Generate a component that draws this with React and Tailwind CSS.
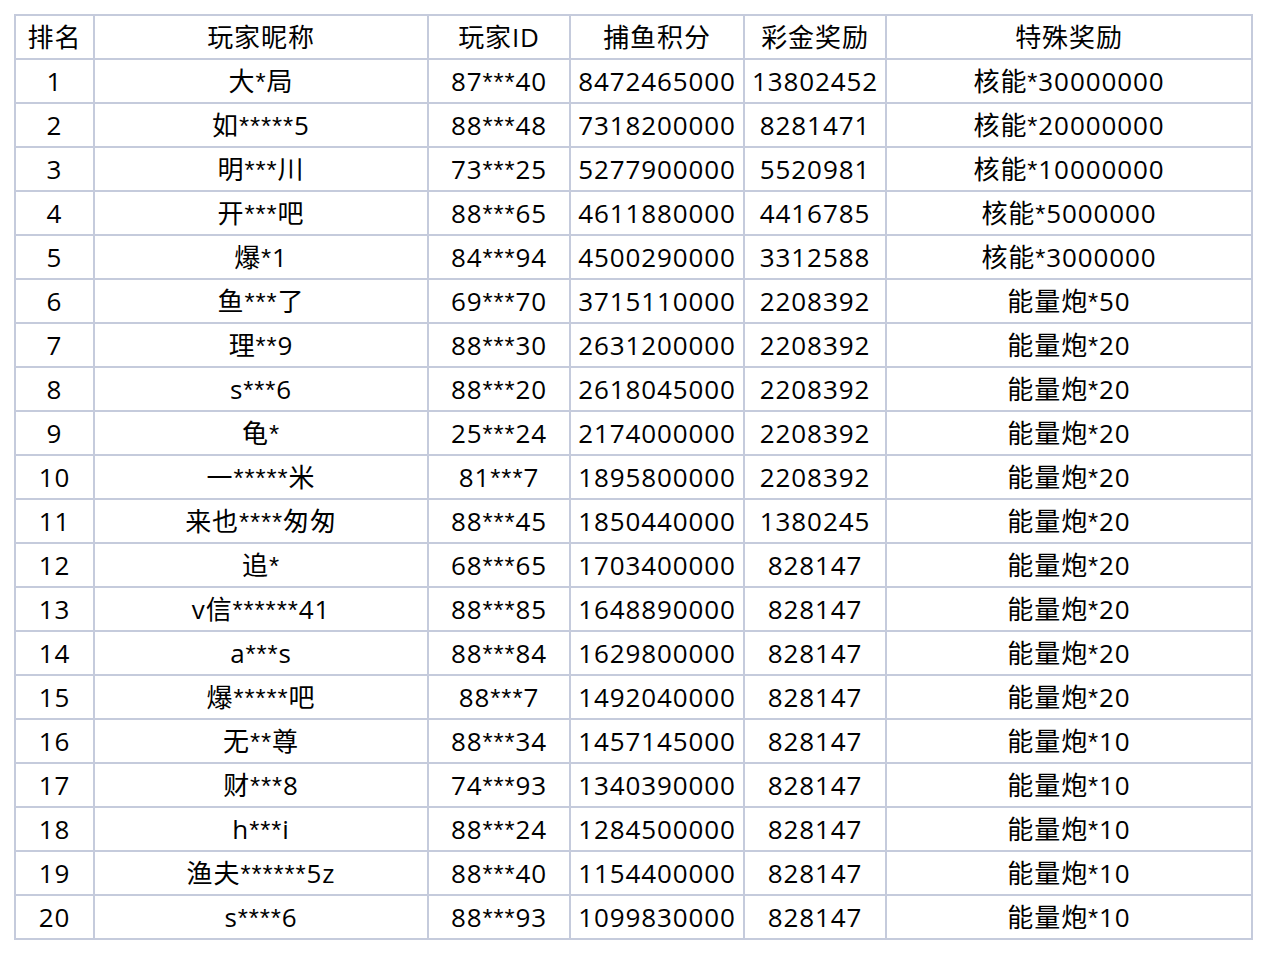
import React from "react";

const rows = [
  ["1", "大*局", "87***40", "8472465000", "13802452", "核能*30000000"],
  ["2", "如*****5", "88***48", "7318200000", "8281471", "核能*20000000"],
  ["3", "明***川", "73***25", "5277900000", "5520981", "核能*10000000"],
  ["4", "开***吧", "88***65", "4611880000", "4416785", "核能*5000000"],
  ["5", "爆*1", "84***94", "4500290000", "3312588", "核能*3000000"],
  ["6", "鱼***了", "69***70", "3715110000", "2208392", "能量炮*50"],
  ["7", "理**9", "88***30", "2631200000", "2208392", "能量炮*20"],
  ["8", "s***6", "88***20", "2618045000", "2208392", "能量炮*20"],
  ["9", "龟*", "25***24", "2174000000", "2208392", "能量炮*20"],
  ["10", "一*****米", "81***7", "1895800000", "2208392", "能量炮*20"],
  ["11", "来也****匆匆", "88***45", "1850440000", "1380245", "能量炮*20"],
  ["12", "追*", "68***65", "1703400000", "828147", "能量炮*20"],
  ["13", "v信******41", "88***85", "1648890000", "828147", "能量炮*20"],
  ["14", "a***s", "88***84", "1629800000", "828147", "能量炮*20"],
  ["15", "爆*****吧", "88***7", "1492040000", "828147", "能量炮*20"],
  ["16", "无**尊", "88***34", "1457145000", "828147", "能量炮*10"],
  ["17", "财***8", "74***93", "1340390000", "828147", "能量炮*10"],
  ["18", "h***i", "88***24", "1284500000", "828147", "能量炮*10"],
  ["19", "渔夫******5z", "88***40", "1154400000", "828147", "能量炮*10"],
  ["20", "s****6", "88***93", "1099830000", "828147", "能量炮*10"],
];

const headers = ["排名", "玩家昵称", "玩家ID", "捕鱼积分", "彩金奖励", "特殊奖励"];
const widths = ["w-[79px]", "w-[334px]", "w-[142px]", "w-[174px]", "w-[142px]", "w-[366px]"];

// asterisks look narrower in the original, so give them Arial-width glyphs
const Cell = ({ text }) =>
  text.split(/(\*+)/).map((part, i) =>
    part.startsWith("*") ? (
      <span key={i} className="font-['Liberation_Sans',sans-serif]">
        {part}
      </span>
    ) : (
      part
    )
  );

export default function App() {
  return (
    <div className="min-h-screen bg-white pt-[14px] pl-[14px] font-['Open_Sans','Noto_Sans_CJK_SC',sans-serif] text-[26px] tracking-[0.9px] text-black">
      <table className="table-fixed border-collapse w-[1237px]">
        <colgroup>
          {widths.map((w, i) => (
            <col key={i} className={w} />
          ))}
        </colgroup>
        <thead>
          <tr className="h-[44px]">
            {headers.map((h) => (
              <th key={h} className="border-2 border-[#c5cbdc] p-0 font-normal text-center leading-none">
                {h}
              </th>
            ))}
          </tr>
        </thead>
        <tbody>
          {rows.map((r) => (
            <tr key={r[0]} className="h-[44px]">
              {r.map((c, i) => (
                <td key={i} className="border-2 border-[#c5cbdc] p-0 text-center leading-none whitespace-nowrap">
                  <Cell text={c} />
                </td>
              ))}
            </tr>
          ))}
        </tbody>
      </table>
    </div>
  );
}
